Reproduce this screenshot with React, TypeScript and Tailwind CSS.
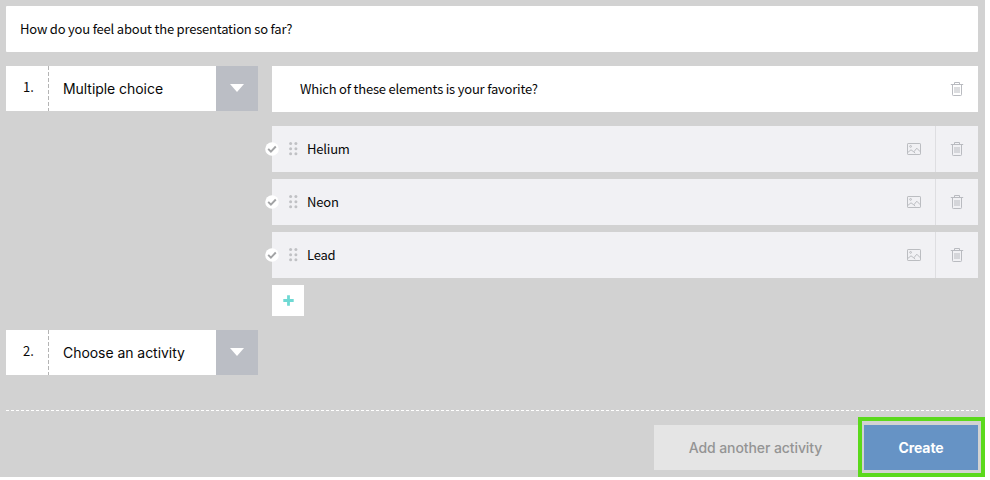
import React from 'react';

const SOURCE = "font-['Noto_Sans_CJK_SC',sans-serif]";

function TrashIcon() {
  return (
    <svg width="14" height="16" viewBox="0 0 14 16" fill="none" stroke="#b9bbc0" strokeWidth="1" className="shrink-0">
      <path d="M.8 3.5h12.4M4.5 3.5v-2h5v2M2.5 3.5v10.2q0 .8.8.8h7.4q.8 0 .8-.8V3.5M5 6v6M7 6v6M9 6v6" />
    </svg>
  );
}

function ImageIcon() {
  return (
    <svg width="14" height="12" viewBox="0 0 14 12" fill="none" stroke="#bbbdc1" strokeWidth="1" className="shrink-0">
      <rect x=".5" y=".5" width="13" height="11" rx=".6" />
      <circle cx="3.6" cy="3.4" r=".9" />
      <path d="M1 9.3l3-2.5 2.8 2.1L9.8 5.2l3.5 3.6M6.8 8.9l1.4 1.3" />
    </svg>
  );
}

function CheckBadge() {
  return (
    <svg width="14" height="14" viewBox="0 0 14 14" className="absolute left-[-7px] top-4">
      <circle cx="7" cy="7" r="6.8" fill="#fff" />
      <path d="M3.2 6.9l2.7 2.8 4.9-5.2" fill="none" stroke="#a2a3a5" strokeWidth="1.9" />
    </svg>
  );
}

function DragDots() {
  return (
    <svg width="9" height="14" viewBox="0 0 9 14" fill="#c0c1c4" className="ml-[17px] shrink-0">
      {[1.6, 6.7, 11.8].map((y) => (
        <React.Fragment key={y}>
          <circle cx="1.6" cy={y} r="1.5" />
          <circle cx="6.9" cy={y} r="1.5" />
        </React.Fragment>
      ))}
    </svg>
  );
}

function ActivitySelect({ number, label }: { number: string; label: string }) {
  return (
    <div className="flex h-[45px] w-[252px] shrink-0 bg-white">
      <div className={`${SOURCE} w-[42px] pl-[17px] text-[13px] leading-[42px]`}>{number}</div>
      <svg width="1" height="45" className="shrink-0">
        <path d="M.5 0v45" stroke="#b4b4b4" strokeDasharray="4 2" />
      </svg>
      <div className="flex-1 pl-[14px] font-['Inter',sans-serif] text-[14px] leading-[46px] tracking-[-0.05px]">{label}</div>
      <div className="flex w-[42px] justify-center bg-[#bbbec5] pt-[18px]">
        <svg width="14" height="8" viewBox="0 0 14 8">
          <path d="M0 0h14L7 8z" fill="#fff" />
        </svg>
      </div>
    </div>
  );
}

function AnswerRow({ label }: { label: string }) {
  return (
    <div className="relative flex h-[46px] items-center bg-[#f1f1f4]">
      <CheckBadge />
      <DragDots />
      <div className={`${SOURCE} ml-[9px] flex-1 text-[13px] leading-[46px] tracking-[-0.2px]`}>{label}</div>
      <div className="mr-[14px]"><ImageIcon /></div>
      <div className="flex h-full w-[43px] items-center justify-center border-l border-[#dedee1]">
        <TrashIcon />
      </div>
    </div>
  );
}

export default function App() {
  return (
    <div className="h-[480px] w-[990px] overflow-hidden bg-white text-[#080808]">
      <div className="flex h-[477px] w-[985px] flex-col bg-[#d2d2d2] pl-1.5 pt-1.5">
        <div className={`${SOURCE} h-[46px] w-[972px] shrink-0 rounded-[1px] bg-white pl-[14px] text-[13px] leading-[46px] tracking-[-0.2px]`}>
          <span>How do you feel about the presentation so far?</span>
        </div>
        <div className="mt-[14px] flex h-[250px] w-[972px] gap-[14px]">
          <ActivitySelect number="1." label="Multiple choice" />
          <div className="flex flex-1 flex-col">
            <div className="flex h-[46px] shrink-0 items-center bg-white pl-7 pr-[14px]">
              <div className={`${SOURCE} flex-1 text-[13px] leading-[46px] tracking-[-0.2px]`}>
                <span>Which of these elements is your favorite?</span>
              </div>
              <TrashIcon />
            </div>
            <div className="mt-[14px] flex flex-col gap-[7px]">
              <AnswerRow label="Helium" />
              <AnswerRow label="Neon" />
              <AnswerRow label="Lead" />
            </div>
            <button className="mt-[7px] flex h-[31px] w-8 items-center justify-center bg-white">
              <svg width="11" height="11" viewBox="0 0 11 11">
                <path d="M5.5 .3v10.4M.3 5.5h10.4" stroke="#6fd9d3" strokeWidth="2.8" />
              </svg>
            </button>
          </div>
        </div>
        <div className="mt-[14px] flex">
          <ActivitySelect number="2." label="Choose an activity" />
        </div>
        <svg width="972" height="1" className="mt-[35px] shrink-0">
          <path d="M0 .5h972" stroke="#fff" strokeDasharray="3 2" />
        </svg>
        <div className="mt-[6px] flex h-[60px] shrink-0 justify-end font-['Inter',sans-serif] text-[14px] tracking-[-0.09px]">
          <button className="mt-2 h-[45px] w-[204px] bg-[#e5e5e5] pr-px font-medium text-[#949494]">Add another activity</button>
          <div className="h-[60px] w-[127px] border-4 border-[#5bd91c] pl-[2px] pt-1">
            <button className="h-[45px] w-[114px] bg-[#6693c5] font-bold text-white">Create</button>
          </div>
        </div>
      </div>
    </div>
  );
}
